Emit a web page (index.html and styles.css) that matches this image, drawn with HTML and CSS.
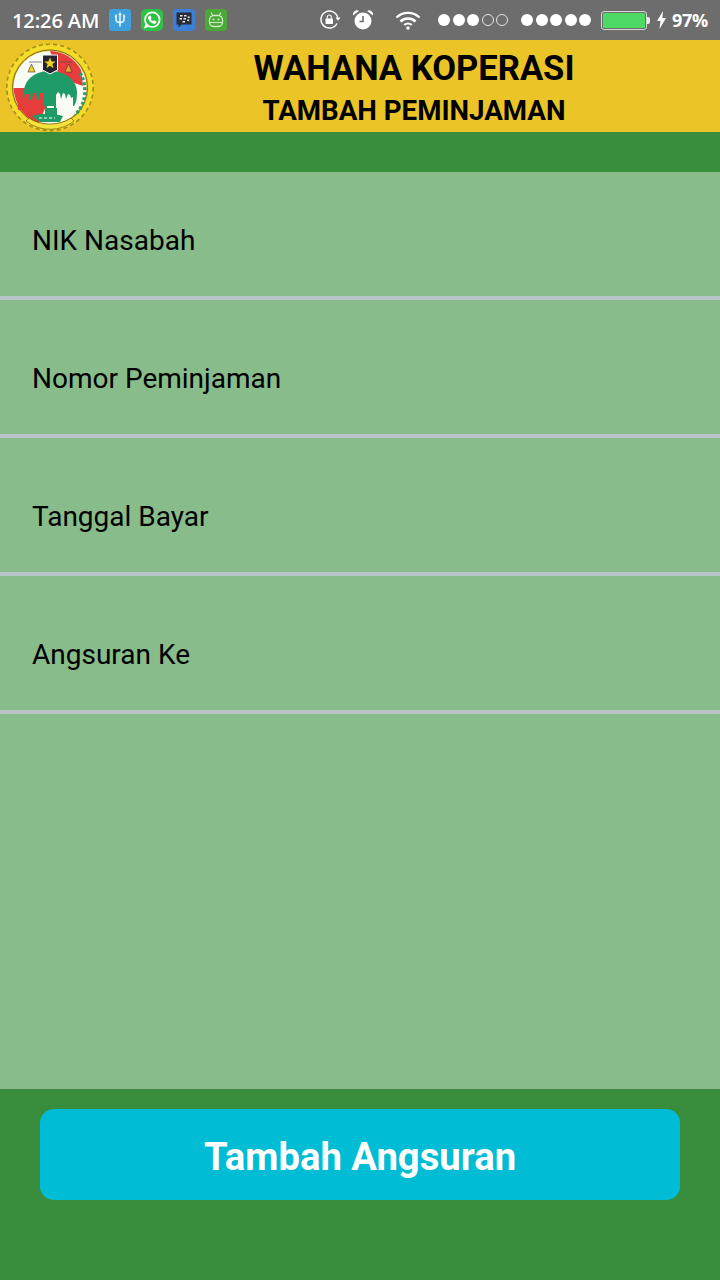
FILE: index.html
```html
<!DOCTYPE html>
<html lang="id">
<head>
<meta charset="utf-8">
<title>Tambah Peminjaman</title>
<link rel="stylesheet" href="styles.css">
</head>
<body>
<div class="screen">
  <div class="status">
    <span class="time">12:26 AM</span>
    <div class="apps">
      <svg class="app" viewBox="0 0 22 22"><rect width="22" height="22" rx="3" fill="#3d9fdc"/><path d="M11 4.500v13M7 7v3.500c0 2 2 3 4 3s4-1 4-3V7" fill="none" stroke="#e8f4fb" stroke-width="1.600"/><path d="M11 3l2 3H9zM7 5l1.500 2.500h-3zM15 5l1.500 2.500h-3z" fill="#e8f4fb"/></svg>
      <svg class="app" viewBox="0 0 22 22"><rect width="22" height="22" rx="5" fill="#2fc145"/><circle cx="11.300" cy="10.700" r="7.300" fill="none" stroke="#fff" stroke-width="1.700"/><path d="M3 19.500l1.600-5.200 3.500 3.500z" fill="#fff"/><path d="M8.300 6.800l1.300-.1 1 2.200-.9 1.100c.5 1 1.300 1.800 2.400 2.300l1.100-1 2.200 1.100-.1 1.200c-.4 1-1.700 1.500-2.800 1.200-3-.8-5-2.900-5.500-5.700-.1-1 .6-1.900 1.300-2.300z" fill="#fff"/></svg>
      <svg class="app" viewBox="0 0 22 22"><rect width="22" height="22" rx="4" fill="#3b7fd6"/><path d="M3.500 3.500h15v12H8.500l-3 3v-3h-2z" fill="#2b2d36"/><path d="M7 6h2.500v1.600H7zM11 6h2.500v1.600H11zM6.500 9H9v1.600H6.500zM10.500 9H13v1.600h-2.500zM14.700 7.500h2V9h-2zM14.200 10.500h2V12h-2zM9.500 12h2.500v1.400H9.500z" fill="#e8e8e8"/></svg>
      <svg class="app" viewBox="0 0 22 22"><rect width="22" height="22" rx="4" fill="#4aa838"/><path d="M6 3.500l1.800 3h6.400l1.800-3" fill="none" stroke="#cfeac7" stroke-width="1.200"/><rect x="4.500" y="6.500" width="13" height="11" rx="4.500" fill="none" stroke="#cfeac7" stroke-width="1.300"/><circle cx="8.500" cy="10.500" r="1" fill="#cfeac7"/><circle cx="13.500" cy="10.500" r="1" fill="#cfeac7"/><path d="M5 13.500h12" stroke="#cfeac7" stroke-width="1.100"/></svg>
    </div>
    <div class="sys">
      <svg class="lock" viewBox="0 0 22 20"><path d="M17 13.500A8.500 8.500 0 1 1 17.800 8" fill="none" stroke="#fff" stroke-width="1.500"/><path d="M15.500 7.500h5l-2.500 3.200z" fill="#fff"/><rect x="5.500" y="8.500" width="7.500" height="5.500" rx=".8" fill="#fff"/><path d="M7.300 8.500V7a2 2 0 0 1 4 0v1.500" fill="none" stroke="#fff" stroke-width="1.200"/></svg>
      <svg class="alarm" viewBox="0 0 22 22"><circle cx="11" cy="12" r="8.500" fill="#fff"/><path d="M11 7V12.500H7.500" fill="none" stroke="#6d6d6d" stroke-width="1.600"/><path d="M1 6.500A4 4 0 0 1 7 2zM21 6.500A4 4 0 0 0 15 2z" fill="#fff"/></svg>
      <svg class="wifi" viewBox="0 0 26 20"><path d="M1.500 7.500a16.500 16.500 0 0 1 23 0" fill="none" stroke="#fff" stroke-width="2.400"/><path d="M5.500 11.500a11 11 0 0 1 15 0" fill="none" stroke="#fff" stroke-width="2.400"/><path d="M9.300 15a5.500 5.500 0 0 1 7.400 0" fill="none" stroke="#fff" stroke-width="2.200"/><circle cx="13" cy="18" r="1.700" fill="#fff"/></svg>
      <div class="dots first"><i class="dot"></i><i class="dot"></i><i class="dot"></i><i class="dot off"></i><i class="dot off"></i></div>
      <div class="dots second"><i class="dot"></i><i class="dot"></i><i class="dot"></i><i class="dot"></i><i class="dot"></i></div>
      <div class="battery"><div class="cell"><div class="level"></div></div><div class="nub"></div></div>
      <svg class="bolt" viewBox="0 0 10 18"><path d="M6.500 0L.5 10h3.500L3 18l6.500-11H5.800z" fill="#fff"/></svg>
      <span class="pct">97%</span>
    </div>
  </div>

  <header class="head">
    <svg class="logo" viewBox="0 0 100 92">
      <circle cx="50" cy="47.500" r="41" fill="none" stroke="#f6dc2a" stroke-width="5"/>
      <circle cx="50" cy="47.500" r="42.500" fill="none" stroke="#a08c1c" stroke-width="3" stroke-dasharray="4 3"/>
      <circle cx="50" cy="47.500" r="41" fill="none" stroke="#f6dc2a" stroke-width="3"/>
      <circle cx="50" cy="47.500" r="37.500" fill="none" stroke="#7a7020" stroke-width="1"/>
      <circle cx="50" cy="47.500" r="36.500" fill="#fbfbf5"/>
      <path d="M50 11a36.500 36.500 0 0 1 31 19L83 46 60 38z" fill="#e63c3c"/>
      <path d="M13.500 48C15 66 26 80 39 83L46 66 46 48z" fill="#e63c3c"/>
      <path d="M80 33a36.500 36.500 0 0 1 3 30 36.500 36.500 0 0 1-8 12" fill="none" stroke="#2d9b6a" stroke-width="3.500" stroke-dasharray="3 2"/>
      <path d="M24 54C23 39 36 31 50 31s27 8 27 22c0 6-1 10-3 13H26z" fill="#1e9b66"/>
      <path d="M25 73V54h4l1 6h2l1-7h3l1 7h2l1-7h4v17l-7 5z" fill="#e63c3c"/>
      <path d="M26 60h-8v10h8z" fill="#e63c3c"/>
      <path d="M45 54h2v20h-2zM54 52h3v24h-3z" fill="#1e9b66"/>
      <path d="M56 76V55l2-3 2 2 1 5 2-6 2 1 1 5 2-5 2 1 1 3 2-1v13l-3 7-10 2z" fill="#fbfbf5"/>
      <path d="M45 68h12v8H45z" fill="#1e9b66"/>
      <path d="M32 76c9-3 21-3 31 0l-3 6H40z" fill="#1e9b66"/>
      <path d="M39 78h16" stroke="#fff" stroke-width="1" stroke-dasharray="3 2"/>
      <path d="M42.500 15h15v15l-7.500 4-7.500-4z" fill="#23242c" stroke="#fff" stroke-width="1"/>
      <path d="M50 17.500l1.600 4h4.100l-3.300 2.600 1.200 4.200-3.600-2.500-3.600 2.500 1.200-4.200-3.300-2.600h4.100z" fill="#f4d21f"/>
      <path d="M29 22h13M58 22h14" stroke="#555" stroke-width=".7"/>
      <path d="M28 32l3.500-8 3.500 8z" fill="#f4d21f" stroke="#333" stroke-width=".6"/>
      <path d="M65 32l3.500-8 3.500 8z" fill="#f0a62a" stroke="#333" stroke-width=".6"/>
      <path d="M29 78c11 8 31 8 42 0l3 3c-13 11-35 11-48 0z" fill="#f7e33c" stroke="#6a5d10" stroke-width=".7"/>
    </svg>
    <div class="titles">
      <div class="title">WAHANA KOPERASI</div>
      <div class="subtitle">TAMBAH PEMINJAMAN</div>
    </div>
  </header>

  <div class="band"></div>

  <main class="form">
    <div class="row first-row">NIK Nasabah</div>
    <div class="row">Nomor Peminjaman</div>
    <div class="row">Tanggal Bayar</div>
    <div class="row">Angsuran Ke</div>
  </main>

  <footer class="foot">
    <button class="cta">Tambah Angsuran</button>
  </footer>
</div>
</body>
</html>
```
FILE: styles.css
```css
* { box-sizing: border-box; }
html, body { margin: 0; padding: 0; }
body { width: 720px; height: 1280px; overflow: hidden; font-family: Roboto, "Liberation Sans", sans-serif; }
.screen { width: 720px; height: 1280px; display: flex; flex-direction: column; background: #388e3c; }

.status { height: 40px; flex: none; background: #6d6d6d; display: flex; align-items: center; padding: 0 12px; color: #fff; }
.time { font-family: "Open Sans", Roboto, sans-serif; font-size: 20px; font-weight: 600; letter-spacing: -.1px; white-space: nowrap; width: 97px; }
.apps { display: flex; gap: 10px; align-items: center; }
.app { width: 22px; height: 22px; display: block; }
.sys { margin-left: auto; display: flex; align-items: center; }
.lock { width: 22px; height: 20px; display: block; }
.alarm { width: 22px; height: 22px; display: block; margin-left: 10px; }
.wifi { width: 26px; height: 20px; display: block; margin-left: 21px; }
.dots { display: flex; gap: 2.500px; align-items: center; }
.dots.first { margin-left: 17px; }
.dots.second { margin-left: 13px; }
.dot { width: 12px; height: 12px; border-radius: 50%; background: #fff; display: block; }
.dot.off { background: transparent; border: 1.200px solid #e4e4e4; }
.battery { display: flex; align-items: center; margin-left: 10px; }
.cell { width: 46px; height: 19px; border: 1px solid #d5d5d5; border-radius: 3px; padding: 1px; }
.level { width: 100%; height: 100%; background: #4cd964; border-radius: 1px; }
.nub { width: 3px; height: 7px; background: #e8e8e8; border-radius: 0 2px 2px 0; }
.bolt { width: 11px; height: 18px; display: block; margin-left: 6px; }
.pct { font-family: "Open Sans", Roboto, sans-serif; font-size: 18px; font-weight: 700; margin-left: 5px; letter-spacing: -.3px; white-space: nowrap; }

.head { height: 92px; flex: none; background: #ebc527; display: flex; }
.logo { width: 100px; height: 92px; display: block; flex: none; }
.titles { flex: 1; display: flex; flex-direction: column; align-items: center; padding-left: 8px; color: #000; font-weight: 700; }
.title { font-size: 34.600px; line-height: 40px; margin-top: 8px; }
.subtitle { font-size: 27.700px; line-height: 34px; margin-top: 6px; }

.band { height: 40px; flex: none; background: #388e3c; }

.form { height: 917px; flex: none; background: #88bc8a; display: flex; flex-direction: column; }
.row { height: 138px; flex: none; border-bottom: 4px solid #b9c3ca; padding: 61px 0 0 32px; font-size: 28px; line-height: 36px; color: #000; }
.first-row { height: 128px; padding-top: 51px; }

.foot { flex: 1; background: #388e3c; display: flex; justify-content: center; padding-top: 20px; align-items: flex-start; }
.cta { width: 640px; height: 91px; border: 0; border-radius: 14px; background: #00bcd4; color: #fff; font-family: Roboto, sans-serif; font-size: 38.250px; font-weight: 700; padding: 4px 0 0; }
```
